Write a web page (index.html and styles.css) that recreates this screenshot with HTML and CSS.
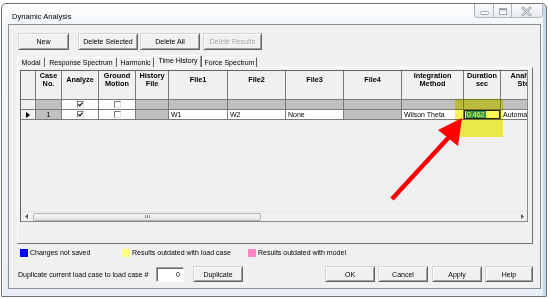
FILE: index.html
```html
<!DOCTYPE html>
<html>
<head>
<meta charset="utf-8">
<title>Dynamic Analysis</title>
<link rel="stylesheet" href="styles.css">
</head>
<body>
<div class="window">
  <div class="titlebar">
    <span class="title">Dynamic Analysis</span>
    <div class="caption">
      <span class="cbtn c-min"><svg width="18" height="13" viewBox="0 0 18 13"><rect x="5.5" y="7.5" width="8" height="3" rx="1" fill="#fff" stroke="#a2a8b0"/></svg></span>
      <span class="cbtn c-max"><svg width="17" height="13" viewBox="0 0 17 13"><rect x="5.5" y="4.5" width="7" height="6" fill="#fff" stroke="#a2a8b0"/><rect x="6" y="5" width="6" height="1.5" fill="#a2a8b0"/></svg></span>
      <span class="cbtn c-close"><svg width="31" height="13" viewBox="0 0 31 13"><path d="M11 4 L18 11 M18 4 L11 11" stroke="#a2a8b0" stroke-width="2.6" stroke-linecap="square"/><path d="M11 4 L18 11 M18 4 L11 11" stroke="#f4f6f8" stroke-width="1" stroke-linecap="square"/></svg></span>
    </div>
  </div>
  <div class="client">
    <div class="toolbar">
      <button class="btn b-new">New</button>
      <button class="btn b-delsel">Delete Selected</button>
      <button class="btn b-delall">Delete All</button>
      <button class="btn b-delres disabled">Delete Results</button>
    </div>
    <div class="tabs">
      <span class="tab t-modal">Modal</span>
      <span class="tab t-resp">Response Spectrum</span>
      <span class="tab t-harm">Harmonic</span>
      <span class="tab t-time active">Time History</span>
      <span class="tab t-force">Force Spectrum</span>
    </div>
    <div class="panel">
      <div class="grid">
        <div class="gridview">
          <div class="row head">
            <div class="cell hd"></div>
            <div class="cell hd"><span>Case<br>No.</span></div>
            <div class="cell hd"><span>Analyze</span></div>
            <div class="cell hd"><span>Ground<br>Motion</span></div>
            <div class="cell hd"><span>History<br>File</span></div>
            <div class="cell hd"><span>File1</span></div>
            <div class="cell hd"><span>File2</span></div>
            <div class="cell hd"><span>File3</span></div>
            <div class="cell hd"><span>File4</span></div>
            <div class="cell hd"><span>Integration<br>Method</span></div>
            <div class="cell hd"><span>Duration<br>sec</span></div>
            <div class="cell hd"><span>Analysis<br>Step</span></div>
          </div>
          <div class="row data">
            <div class="cell rh"></div>
            <div class="cell gray"></div>
            <div class="cell white center"><span class="chk"><svg width="5" height="5" viewBox="0 0 5 5"><path d="M0.4 2.2 L1.8 3.8 L4.6 0.6" fill="none" stroke="#000" stroke-width="1.1"/></svg></span></div>
            <div class="cell white center"><span class="chk"></span></div>
            <div class="cell gray"></div>
            <div class="cell gray"></div>
            <div class="cell gray"></div>
            <div class="cell gray"></div>
            <div class="cell gray"></div>
            <div class="cell gray"></div>
            <div class="cell gray"></div>
            <div class="cell gray"></div>
          </div>
          <div class="row data">
            <div class="cell rh center"><svg width="4" height="6" viewBox="0 0 4 6"><path d="M0 0 L4 3 L0 6 Z" fill="#000"/></svg></div>
            <div class="cell gray center">1</div>
            <div class="cell white center"><span class="chk"><svg width="5" height="5" viewBox="0 0 5 5"><path d="M0.4 2.2 L1.8 3.8 L4.6 0.6" fill="none" stroke="#000" stroke-width="1.1"/></svg></span></div>
            <div class="cell white center"><span class="chk"></span></div>
            <div class="cell gray"></div>
            <div class="cell white txt">W1</div>
            <div class="cell white txt">W2</div>
            <div class="cell white txt">None</div>
            <div class="cell gray"></div>
            <div class="cell white txt">Wilson Theta</div>
            <div class="cell white edit"><span class="sel">0.462</span></div>
            <div class="cell white txt">Automatic</div>
          </div>
        </div>
        <div class="hscroll">
          <span class="sarrow"><svg width="3" height="5" viewBox="0 0 3 5"><path d="M3 0 L0 2.5 L3 5 Z" fill="#5a5a5a"/></svg></span>
          <span class="thumb"><span class="grip"></span></span>
          <span class="strack"></span>
          <span class="sarrow"><svg width="3" height="5" viewBox="0 0 3 5"><path d="M0 0 L3 2.5 L0 5 Z" fill="#5a5a5a"/></svg></span>
        </div>
      </div>
    </div>
    <div class="legend">
      <span class="litem l1"><span class="sw blue"></span>Changes not saved</span>
      <span class="litem l2"><span class="sw yellow"></span>Results outdated with load case</span>
      <span class="litem l3"><span class="sw pink"></span>Results outdated with model</span>
    </div>
    <div class="bottom">
      <span class="dlabel">Duplicate current load case to load case #</span>
      <span class="numbox">0</span>
      <button class="btn b-dup">Duplicate</button>
      <button class="btn b-ok">OK</button>
      <button class="btn b-cancel">Cancel</button>
      <button class="btn b-apply">Apply</button>
      <button class="btn b-help">Help</button>
    </div>
  </div>
</div>
<div class="highlight"></div>
<svg class="arrow" width="550" height="299" viewBox="0 0 550 299">
  <line x1="392" y1="199" x2="450" y2="136" stroke="#ff0000" stroke-width="4.5"/>
  <polygon points="462,118 438,130 458,146" fill="#ff0000"/>
</svg>
</body>
</html>
```
FILE: styles.css
```css
* { box-sizing: border-box; }

body {
  margin: 0;
  width: 550px;
  height: 299px;
  overflow: hidden;
  position: relative;
  background: #ffffff;
  font-family: "Liberation Sans", Arial, sans-serif;
  font-size: 7px;
  color: #000;
}

.window {
  margin: 3px 0 0 1px;
  width: 546px;
  height: 294px;
  border: 1px solid #707070;
  border-radius: 5px 5px 1px 1px;
  background: linear-gradient(180deg, #fdfdfe 0, #f2f5f8 22px, #e8eef5 100%);
  box-shadow: inset 1px 1px 0 #ffffff, inset -3px 0 0 #c7d6e8;
  display: flex;
  flex-direction: column;
}

.titlebar {
  height: 20px;
  flex: none;
  display: flex;
  justify-content: space-between;
  align-items: flex-start;
}

.title {
  font-size: 7.6px;
  line-height: 8px;
  padding: 9px 0 0 10px;
  color: #000;
}

.caption {
  display: flex;
  height: 14px;
  margin-right: 3px;
  border: 1px solid #b0b8c2;
  border-top: none;
  border-radius: 0 0 4px 4px;
  overflow: hidden;
  background: linear-gradient(#fbfcfd, #e6ebf0);
}

.cbtn { display: block; height: 13px; }
.cbtn svg { display: block; }
.cbtn + .cbtn { border-left: 1px solid #b0b8c2; }
.c-min { width: 18px; }
.c-max { width: 18px; }
.c-close { width: 31px; }

.client {
  flex: 1;
  margin: 0 5px 7px 6px;
  border: 1px solid #8e8f8f;
  background: #f0f0f0;
  padding: 8px 7px 0 8px;
  display: flex;
  flex-direction: column;
}

.btn {
  height: 17px;
  padding: 0;
  margin: 0;
  font-family: "Liberation Sans", Arial, sans-serif;
  font-size: 7px;
  color: #000;
  background: #f0f0f0;
  border: 1px solid;
  border-color: #d4d4d4 #646464 #646464 #d4d4d4;
  box-shadow: inset 1px 1px 0 #ffffff, inset -1px -1px 0 #a0a0a0;
  border-radius: 0;
}

.btn.disabled {
  color: #a3a3a3;
  text-shadow: 1px 1px 0 #ffffff;
}

.toolbar {
  display: flex;
  height: 17px;
  margin-left: 1px;
  flex: none;
}

.b-new { width: 51px; }
.b-delsel { width: 60px; margin-left: 9px; }
.b-delall { width: 60px; margin-left: 2px; }
.b-delres { width: 59px; margin-left: 3px; }

.tabs {
  display: flex;
  align-items: flex-end;
  height: 12px;
  margin-top: 5px;
  flex: none;
}

.tab {
  height: 10px;
  line-height: 9px;
  text-align: center;
  white-space: nowrap;
  border-top: 1px solid #ffffff;
  border-left: 1px solid #ffffff;
  border-right: 1px solid #5e5e5e;
  background: #f0f0f0;
  color: #000;
}

.tab.active {
  height: 12px;
  line-height: 10px;
  box-shadow: inset -1px 0 0 #a0a0a0;
}

.t-modal { width: 28px; }
.t-resp { width: 72px; }
.t-harm { width: 37px; }
.t-time { width: 48px; }
.t-force { width: 55px; }

.panel {
  height: 177px;
  flex: none;
  border: 1px solid;
  border-color: #ffffff #6e6e6e #6e6e6e #ffffff;
  padding: 2px 4px 0 2px;
}

.grid {
  height: 152px;
  border: 1px solid;
  border-color: #646464 #8a8a8a #8a8a8a #646464;
  background: #f0f0f0;
  display: flex;
  flex-direction: column;
  overflow: hidden;
}

.gridview {
  flex: 1;
  overflow: hidden;
}

.row {
  display: grid;
  grid-template-columns: 15px 26px 37px 37px 33px 59px 58px 58px 58px 62px 37px 50px;
  width: 530px;
  height: 10px;
}

.row.head { height: 29px; }

.cell {
  border-right: 1px solid #7a7a7a;
  border-bottom: 1px solid #7a7a7a;
  overflow: hidden;
  white-space: nowrap;
  line-height: 9px;
}

.hd {
  background: #f0f0f0;
  font-weight: bold;
  font-size: 7.3px;
  line-height: 8px;
  text-align: center;
  display: flex;
  flex-direction: column;
  justify-content: center;
  padding-bottom: 10px;
}

.rh { background: #f0f0f0; }
.gray { background: #c0c0c0; }
.white { background: #ffffff; }

.center {
  display: flex;
  align-items: center;
  justify-content: center;
}

.txt { padding-left: 2px; }

.chk {
  width: 7px;
  height: 7px;
  border-top: 1px solid #7c7c7c;
  border-left: 1px solid #7c7c7c;
  border-right: 1px solid #e2e2e2;
  border-bottom: 1px solid #e2e2e2;
  background: #fff;
  display: flex;
  align-items: center;
  justify-content: center;
}

.chk svg { display: block; }

.edit {
  box-shadow: inset 0 0 0 1px #1e1e1e;
  padding-left: 2px;
}

.sel {
  background: #3399ff;
  color: #ffffff;
  padding: 0 1px;
}

.hscroll {
  height: 10px;
  flex: none;
  display: flex;
  align-items: center;
  background: #f0f0f0;
  border-top: 1px solid #e6e6e6;
}

.sarrow {
  width: 10px;
  height: 9px;
  display: flex;
  align-items: center;
  justify-content: center;
}

.sarrow svg { display: block; }

.thumb {
  width: 228px;
  height: 8px;
  margin-left: 2px;
  border: 1px solid #b2b2b2;
  border-radius: 2px;
  background: linear-gradient(#f7f7f7, #e3e3e3);
  display: flex;
  align-items: center;
  justify-content: center;
}

.grip {
  width: 5px;
  height: 3px;
  background: repeating-linear-gradient(90deg, #8c8c8c 0 1px, transparent 1px 2px);
}

.strack { flex: 1; }

.legend {
  display: flex;
  align-items: center;
  height: 9px;
  margin-top: 4px;
  flex: none;
  white-space: nowrap;
}

.litem {
  display: flex;
  align-items: center;
  gap: 2px;
}

.l1 { margin-left: 3px; width: 102px; }
.l2 { width: 126px; }

.sw {
  width: 8px;
  height: 8px;
  display: block;
}

.sw.blue { background: #0000ff; }
.sw.yellow { background: #ffff80; }
.sw.pink { background: #ff84c4; }

.bottom {
  display: flex;
  align-items: center;
  height: 16px;
  margin-top: 9px;
  flex: none;
}

.dlabel {
  width: 138px;
  margin-left: 1px;
  white-space: nowrap;
}

.numbox {
  width: 28px;
  height: 15px;
  background: #ffffff;
  border: 1px solid;
  border-color: #a0a0a0 #ffffff #ffffff #a0a0a0;
  box-shadow: inset 1px 1px 0 #696969;
  text-align: right;
  padding-right: 3px;
  line-height: 13px;
}

.bottom .btn { height: 16px; }
.b-dup { width: 50px; margin-left: 9px; }
.b-ok { width: 50px; margin-left: auto; }
.b-cancel { width: 50px; margin-left: 3px; }
.b-apply { width: 50px; margin-left: 4px; }
.b-help { width: 48px; margin-left: 3px; }

.highlight {
  position: absolute;
  left: 455px;
  top: 99px;
  width: 48px;
  height: 38px;
  background: #f8f850;
  mix-blend-mode: multiply;
}

.arrow {
  position: absolute;
  left: 0;
  top: 0;
  pointer-events: none;
}
```
